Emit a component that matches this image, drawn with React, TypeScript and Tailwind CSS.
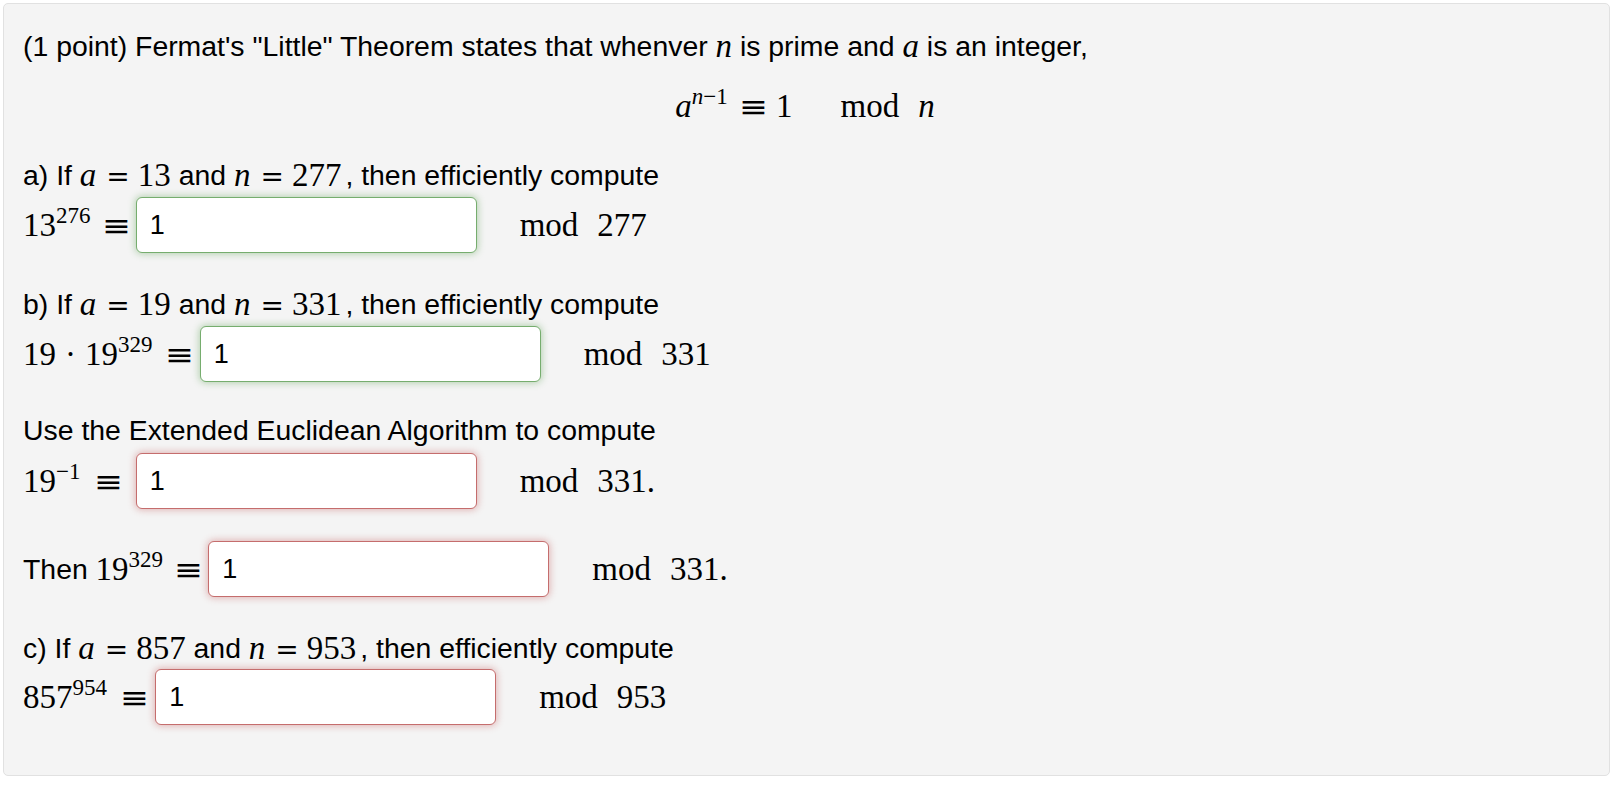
import React from 'react'

const serif = "font-['Liberation_Serif','Times_New_Roman',serif]"

const M = ({ children, className = '' }: { children: React.ReactNode; className?: string }) => (
  <span className={`${serif} text-[33px] leading-none ${className}`}>{children}</span>
)

const V = ({ children }: { children: React.ReactNode }) => <span className="italic">{children}</span>

const Sup = ({ children }: { children: React.ReactNode }) => (
  <sup className="text-[23px] -top-[13px]">{children}</sup>
)

// relation symbols are heavier than what the serif face gives
const Rel = ({ children, className = 'ml-[10px] mr-[8px]' }: { children: React.ReactNode; className?: string }) => (
  <span className={`font-['DejaVu_Sans',sans-serif] text-[28px] ${className}`}>{children}</span>
)

// the ≡ in the reference is a little wider, so stretch the glyph sideways
const Equiv = ({ className = 'ml-[13px] mr-[7px]' }: { className?: string }) => (
  <span className={`inline-block scale-x-[1.15] font-['DejaVu_Sans',sans-serif] text-[30px] leading-none ${className}`}>
    ≡
  </span>
)

const Line = ({ children, className = '' }: { children: React.ReactNode; className?: string }) => (
  <div className={`flex h-[40px] items-center whitespace-pre ${className}`}>{children}</div>
)

const Answer = ({ ok }: { ok: boolean }) => (
  <input
    readOnly
    value="1"
    className={`h-[56px] w-[341px] rounded-[6px] border bg-white pl-[13px] text-[27px] text-black outline-none ${
      ok
        ? 'border-[#76ad6e] shadow-[0_0_7px_1px_rgba(100,165,90,0.45)]'
        : 'border-[#c56d6d] shadow-[0_0_7px_1px_rgba(200,100,100,0.45)]'
    }`}
  />
)

const Row = ({
  lead,
  ok,
  mod,
  className = '',
}: {
  lead: React.ReactNode
  ok: boolean
  mod: string
  className?: string
}) => (
  <div className={`flex h-[56px] items-center ${className}`}>
    {lead}
    <Answer ok={ok} />
    <M className="ml-[43px]">
      mod<span className="ml-[19px]">{mod}</span>
    </M>
  </div>
)

export default function App() {
  return (
    <div className="min-h-screen bg-white p-[3px] pr-[4px] font-['Liberation_Sans',Arial,sans-serif] text-[28.4px] text-black">
      <div className="rounded-[5px] border border-[#e1e1e1] bg-[#f4f4f4] pb-[50px] pl-[19px] pt-[22px]">
        <Line>
          (1 point) Fermat's "Little" Theorem states that whenver <M><V>n</V></M> is prime and <M><V>a</V></M> is an
          integer,
        </Line>

        <div className="mt-[20px] flex h-[40px] items-center justify-center pr-[22px]">
          <M>
            <V>a</V>
            <Sup>
              <V>n</V>−1
            </Sup>
            <Equiv className="ml-[13px] mr-[10px]" />1<span className="ml-[48px]">mod</span>
            <span className="ml-[19px]">
              <V>n</V>
            </span>
          </M>
        </div>

        <Line className="mt-[29px]">
          a) If <M><V>a</V><Rel>=</Rel>13</M> and <M><V>n</V><Rel>=</Rel>277</M><span className="ml-[4px]">, then efficiently compute</span>
        </Line>
        <Row
          className="mt-[2px]"
          ok
          mod="277"
          lead={
            <M>
              13<Sup>276</Sup>
              <Equiv />
            </M>
          }
        />

        <Line className="mt-[31px]">
          b) If <M><V>a</V><Rel>=</Rel>19</M> and <M><V>n</V><Rel>=</Rel>331</M><span className="ml-[4px]">, then efficiently compute</span>
        </Line>
        <Row
          className="mt-[2px]"
          ok
          mod="331"
          lead={
            <M>
              19<span className="mx-[9px]">·</span>19<Sup>329</Sup>
              <Equiv className="ml-[14px] mr-[8px]" />
            </M>
          }
        />

        <Line className="mt-[28px]">Use the Extended Euclidean Algorithm to compute</Line>
        <Row
          className="mt-[3px]"
          ok={false}
          mod="331."
          lead={
            <M>
              19<Sup>−1</Sup>
              <Equiv className="ml-[16px] mr-[14px]" />
            </M>
          }
        />

        <Row
          className="mt-[32px]"
          ok={false}
          mod="331."
          lead={
            <>
              <span className="whitespace-pre">Then </span>
              <M>
                19<Sup>329</Sup>
                <Equiv />
              </M>
            </>
          }
        />

        <Line className="mt-[31px]">
          c) If <M><V>a</V><Rel>=</Rel>857</M> and <M><V>n</V><Rel>=</Rel>953</M><span className="ml-[4px]">, then efficiently compute</span>
        </Line>
        <Row
          className="mt-[1px]"
          ok={false}
          mod="953"
          lead={
            <M>
              857<Sup>954</Sup>
              <Equiv className="ml-[15px] mr-[8px]" />
            </M>
          }
        />
      </div>
    </div>
  )
}
